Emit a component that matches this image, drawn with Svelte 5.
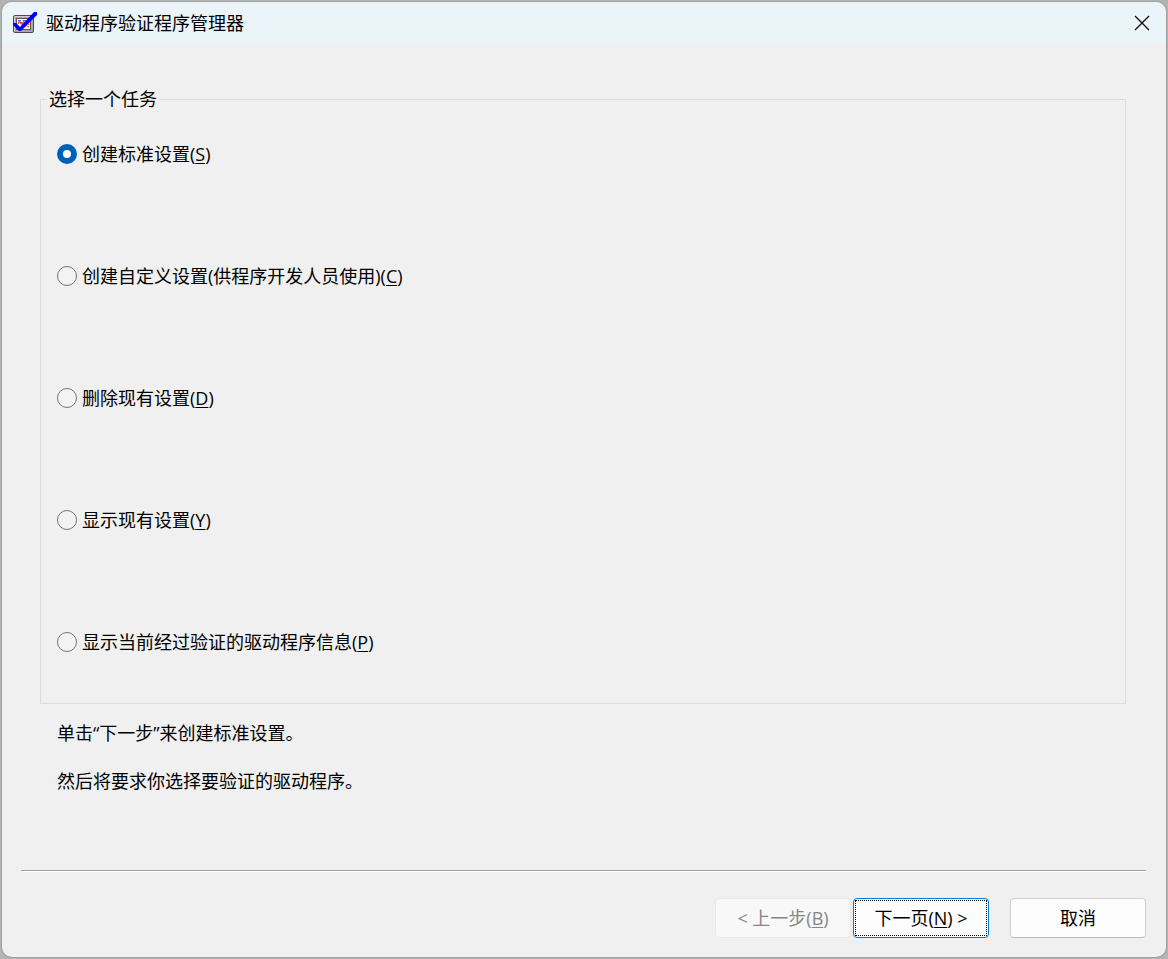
<script>
    let tasks = [
        { id: "standard", text: "创建标准设置", key: "S" },
        { id: "custom", text: "创建自定义设置(供程序开发人员使用)", key: "C" },
        { id: "delete", text: "删除现有设置", key: "D" },
        { id: "existing", text: "显示现有设置", key: "Y" },
        { id: "current", text: "显示当前经过验证的驱动程序信息", key: "P" },
    ];
    let selected = $state("standard");
</script>

<div class="desktop">
    <main class="window">
        <header class="titlebar">
            <svg class="app-icon" viewBox="0 0 24 22" aria-hidden="true">
                <rect x="0.5" y="3.5" width="20" height="17" rx="1.5" fill="#a8a8a8" stroke="#4a4a4a" />
                <path d="M1.500 19V4.500H19" fill="none" stroke="#d0d0d0" />
                <rect x="3.500" y="6.500" width="14" height="11" fill="#fafafa" stroke="#585858" />
                <path d="M5 8.500h3M10 8.500h3M7 10.500h2M12 10.500h2" stroke="#4868e8" />
                <path d="M5 12l1.500-3L9 13l1.500-4 2 4 1.500-4 2 4M11 15l2-1.500 3 1.500" fill="none" stroke="#f02840" stroke-width="1.200" stroke-dasharray="3 1" />
                <path d="M0 11h3l4 4L21 0h3v3L8 19H6L0 13z" fill="#0000f8" />
            </svg>
            <h1>驱动程序验证程序管理器</h1>
            <button class="close" type="button" aria-label="关闭">
                <svg viewBox="0 0 16 16" aria-hidden="true">
                    <path d="M1 1l14 14M15 1L1 15" fill="none" stroke="#111" stroke-width="1.4" />
                </svg>
            </button>
        </header>

        <form class="page" onsubmit={(evt) => evt.preventDefault()}>
            <fieldset>
                <legend>选择一个任务</legend>
                <div class="tasks">
                    {#each tasks as task (task.id)}
                        <label>
                            <input type="radio" name="task" value={task.id} bind:group={selected}>
                            <span>{task.text}(<u>{task.key}</u>)</span>
                        </label>
                    {/each}
                </div>
            </fieldset>

            <div class="hint">
                <p>单击“下一步”来创建标准设置。</p>
                <p>然后将要求你选择要验证的驱动程序。</p>
            </div>

            <footer>
                <hr>
                <div class="buttons">
                    <button type="button" disabled>&lt; 上一步(<u>B</u>)</button>
                    <button class="next" type="submit"><span>下一页(<u>N</u>) &gt;</span></button>
                    <button class="cancel" type="button">取消</button>
                </div>
            </footer>
        </form>
    </main>
</div>

<style>
    .desktop {
        box-sizing: border-box;
        min-height: 100vh;
        padding: 2px;
        display: flex;
        background: #b4b4b4;
        font-family: "Open Sans", "Noto Sans CJK SC", sans-serif;
        font-size: 18px;
        line-height: 24px;
        color: #000;
    }
    .window {
        flex: 1;
        display: flex;
        flex-direction: column;
        border-radius: 10px;
        overflow: hidden;
        background: #f0f0f0;
        box-shadow: 0 0 0 1px #a0a0a0;
    }
    .titlebar {
        box-sizing: border-box;
        display: flex;
        align-items: center;
        height: 43px;
        padding: 0 16px 2px 11px;
        background: #ebf4f8;
    }
    .app-icon {
        width: 24px;
        height: 22px;
    }
    h1 {
        flex: 1;
        margin: 0 0 0 9px;
        font-size: 18px;
        font-weight: 400;
        line-height: 24px;
    }
    button {
        font: inherit;
        color: inherit;
        padding: 0;
    }
    .close {
        display: flex;
        border: none;
        background: none;
    }
    .close svg {
        width: 16px;
        height: 16px;
    }
    .page {
        flex: 1;
        display: flex;
        flex-direction: column;
        padding: 42px 20px 19px 19px;
    }
    fieldset {
        margin: 0 20px 0 19px;
        padding: 31px 16px 49px;
        border: 1px solid #dcdcdc;
        min-width: 0;
    }
    legend {
        margin-left: -10px;
        padding: 0 2px;
    }
    .tasks {
        display: flex;
        flex-direction: column;
        align-items: flex-start;
        gap: 98px;
    }
    label {
        display: flex;
        align-items: center;
        gap: 5px;
    }
    input {
        appearance: none;
        box-sizing: border-box;
        width: 20px;
        height: 20px;
        margin: 0;
        border: 1px solid #757575;
        border-radius: 50%;
        background: #f3f3f3;
    }
    input:checked {
        border: 6px solid #005fb8;
        background: #fff;
    }
    u {
        text-decoration-thickness: 1px;
        text-underline-offset: 2px;
    }
    .hint {
        display: flex;
        flex-direction: column;
        gap: 24px;
        margin: 17px 36px 24px;
    }
    p {
        margin: 0;
    }
    footer {
        margin-top: auto;
    }
    hr {
        margin: 0 0 26px;
        border: none;
        border-top: 1px solid #a0a0a0;
        border-bottom: 1px solid #fff;
    }
    .buttons {
        display: flex;
        justify-content: flex-end;
        gap: 2px;
    }
    .buttons button {
        width: 136px;
        height: 40px;
        border: 1px solid #d0d0d0;
        border-bottom-color: #bababa;
        border-radius: 4px;
        background: #fdfdfd;
    }
    .buttons button:disabled {
        border-color: #e8e8e8;
        background: #f8f8f8;
        color: #868686;
    }
    .buttons .next {
        border-color: #0078d4;
    }
    .next span {
        display: flex;
        align-items: center;
        justify-content: center;
        white-space: pre;
        height: 34px;
        margin: 1px;
        border: 1px dotted #000;
    }
    .buttons .cancel {
        margin-left: 19px;
    }
</style>
